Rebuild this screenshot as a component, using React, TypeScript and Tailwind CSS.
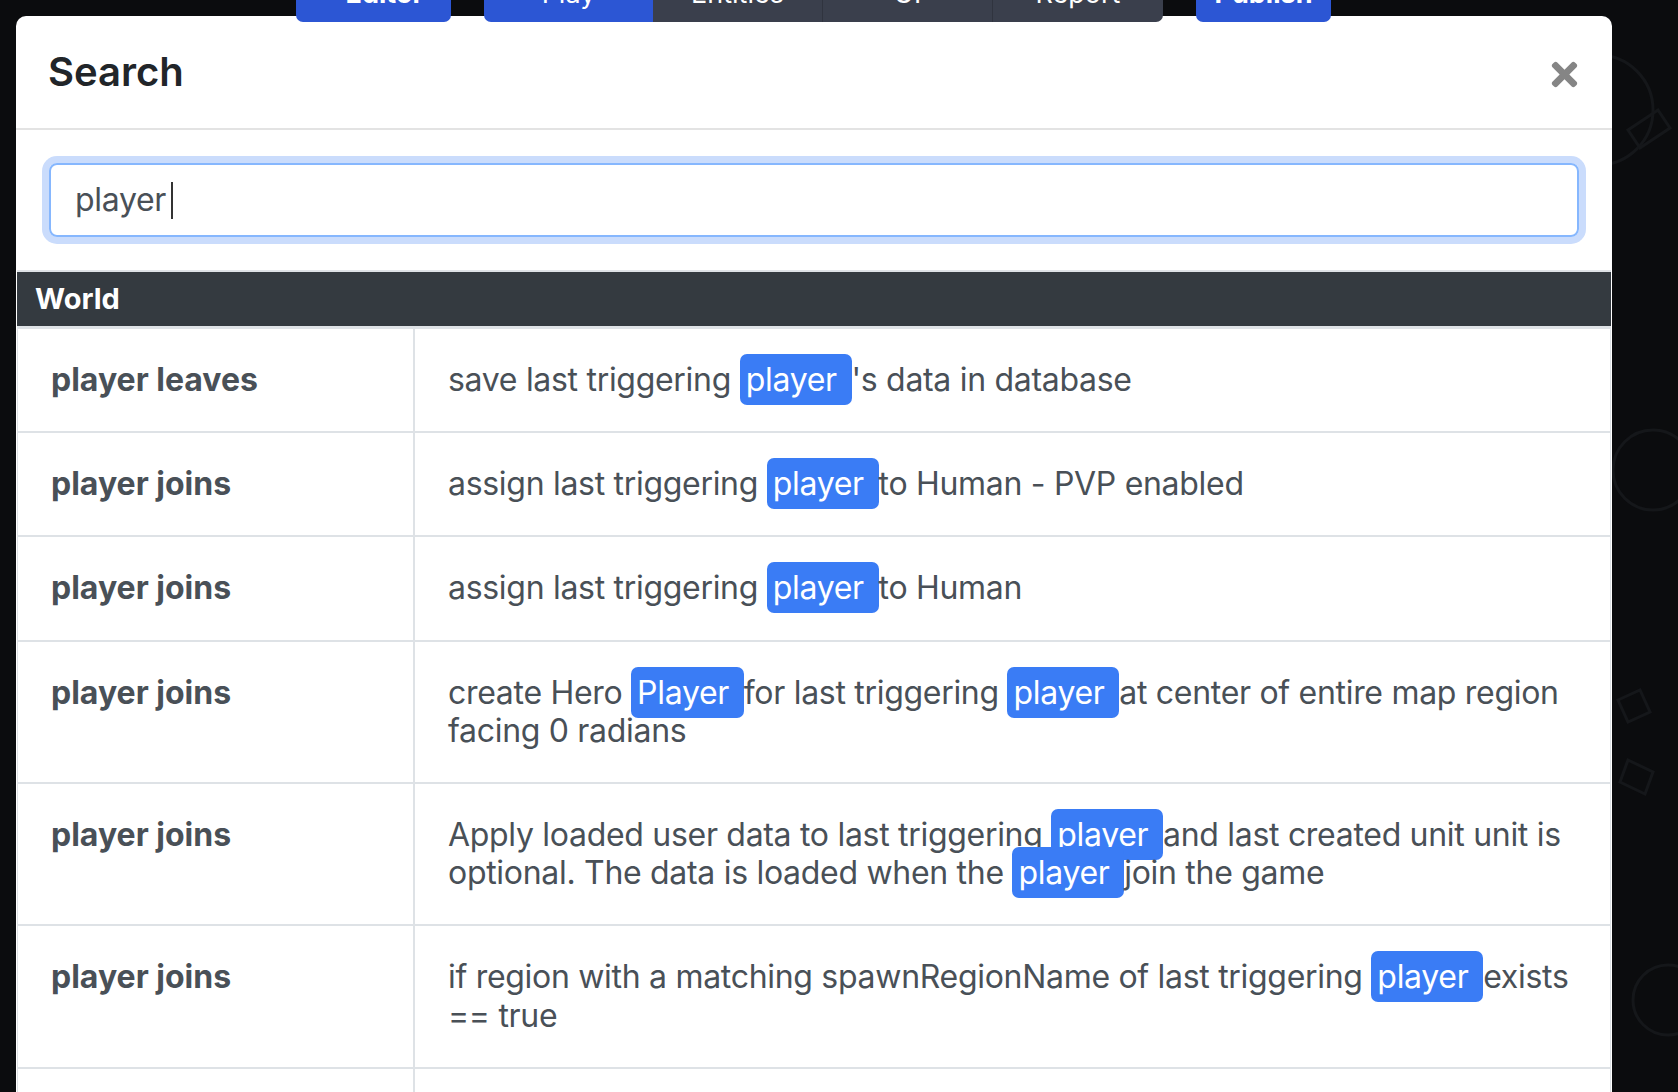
import React from 'react';
import { FaTimes } from 'react-icons/fa';

type Part = string | { hl: string };

const rows: { event: string; text: Part[] }[] = [
  { event: 'player leaves', text: ['save last triggering ', { hl: 'player' }, "'s data in database"] },
  { event: 'player joins', text: ['assign last triggering ', { hl: 'player' }, 'to Human - PVP enabled'] },
  { event: 'player joins', text: ['assign last triggering ', { hl: 'player' }, 'to Human'] },
  {
    event: 'player joins',
    text: ['create Hero ', { hl: 'Player' }, 'for last triggering ', { hl: 'player' }, 'at center of entire map region facing 0 radians'],
  },
  {
    event: 'player joins',
    text: [
      'Apply loaded user data to last triggering ',
      { hl: 'player' },
      'and last created unit unit is optional. The data is loaded when the ',
      { hl: 'player' },
      'join the game',
    ],
  },
  {
    event: 'player joins',
    text: ['if region with a matching spawnRegionName of last triggering ', { hl: 'player' }, 'exists == true'],
  },
  { event: 'player joins', text: ['make last triggering ', { hl: 'player' }, 'select unit'] },
];

const Highlight: React.FC<{ word: string }> = ({ word }) => (
  <span className="bg-[#3a7cf5] text-white rounded-[7px] px-[6px] py-[6px]">{word} </span>
);

const TopButtons: React.FC = () => (
  <div className="absolute top-0 left-[296px] z-20 flex items-start text-white text-[27px] leading-[28px]">
    <div className="w-[155px] h-[52px] -mt-[30px] bg-[#2c56d4] rounded-b-[7px] flex items-end justify-center pb-[14px] font-bold">
      ≡ Editor
    </div>
    <div className="ml-[33px] flex">
      <div className="w-[169px] h-[52px] -mt-[30px] bg-[#2c56d4] rounded-bl-[7px] flex items-end justify-center pb-[14px]">
        Play
      </div>
      <div className="w-[170px] h-[52px] -mt-[30px] bg-[#3a3f4c] flex items-end justify-center pb-[14px] border-r border-[#30343f]">
        Entities
      </div>
      <div className="w-[170px] h-[52px] -mt-[30px] bg-[#3a3f4c] flex items-end justify-center pb-[14px] border-r border-[#30343f]">
        UI
      </div>
      <div className="w-[170px] h-[52px] -mt-[30px] bg-[#3a3f4c] rounded-br-[7px] flex items-end justify-center pb-[14px]">
        Report
      </div>
    </div>
    <div className="ml-[33px] w-[135px] h-[52px] -mt-[30px] bg-[#2c56d4] rounded-b-[7px] flex items-end justify-center pb-[14px] font-bold">
      Publish
    </div>
  </div>
);

const Backdrop: React.FC = () => (
  <svg className="absolute right-0 top-0 h-full w-[120px]" viewBox="0 0 120 1092" fill="none">
    <g stroke="#15171a" strokeWidth="3">
      <circle cx="40" cy="110" r="55" />
      <path d="M70 130 l30 -20 l12 18 l-30 20 z" />
      <circle cx="95" cy="470" r="40" />
      <path d="M60 700 l22 -10 l10 22 l-22 10 z M70 760 l25 12 l-8 22 l-25 -12 z" />
      <circle cx="110" cy="1000" r="35" />
    </g>
  </svg>
);

const App: React.FC = () => {
  return (
    <div
      className="relative h-screen w-full overflow-hidden bg-[#0b0c0e]"
      style={{ fontFamily: 'Inter, "Noto Sans", sans-serif' }}
    >
      <Backdrop />
      <TopButtons />

      <div className="relative pt-4 pl-4 w-[1612px]">
        <div className="bg-white rounded-t-[10px] min-h-[1100px]">
          {/* header */}
          <div className="h-[114px] flex items-center justify-between pl-[32px] pr-[29px] border-b-2 border-[#e3e3e3]">
            <h5 className="text-[40px] font-semibold text-[#212529] leading-none">Search</h5>
            <FaTimes className="text-[#858585] mt-[4px]" size={37} />
          </div>

          {/* search box */}
          <div className="px-[33px] pt-[33px] pb-[33px]">
            <div className="h-[74px] border-2 border-[#86b7fe] rounded-[8px] shadow-[0_0_0_7px_#cadcfc] flex items-center pl-[24px] text-[32px] tracking-[-0.3px] text-[#495057]">
              <span>player</span>
              <span className="ml-[5px] w-[2px] h-[37px] bg-[#333]" />
            </div>
          </div>

          {/* results */}
          <div className="border-t-2 border-[#dee2e6] mx-px">
            <div className="h-[54px] bg-[#343a40] flex items-center pl-[18px] text-white text-[29px] font-bold">
              World
            </div>
            <div className="border-t-[3px] border-[#dee2e6]">
              {rows.map((row, i) => (
                <div
                  key={i}
                  className="grid grid-cols-[397px_1fr] border-b-2 border-l border-r border-[#dee2e6] text-[32px] leading-[38.2px] text-[#495057]"
                >
                  <div className="border-r-2 border-[#dee2e6] pl-[33px] pr-4 py-[32px] font-bold">{row.event}</div>
                  <div className="pl-[33px] pr-[20px] py-[32px] tracking-[-0.3px]">
                    {row.text.map((p, j) =>
                      typeof p === 'string' ? <span key={j}>{p}</span> : <Highlight key={j} word={p.hl} />
                    )}
                  </div>
                </div>
              ))}
            </div>
          </div>
        </div>
      </div>
    </div>
  );
};

export default App;
